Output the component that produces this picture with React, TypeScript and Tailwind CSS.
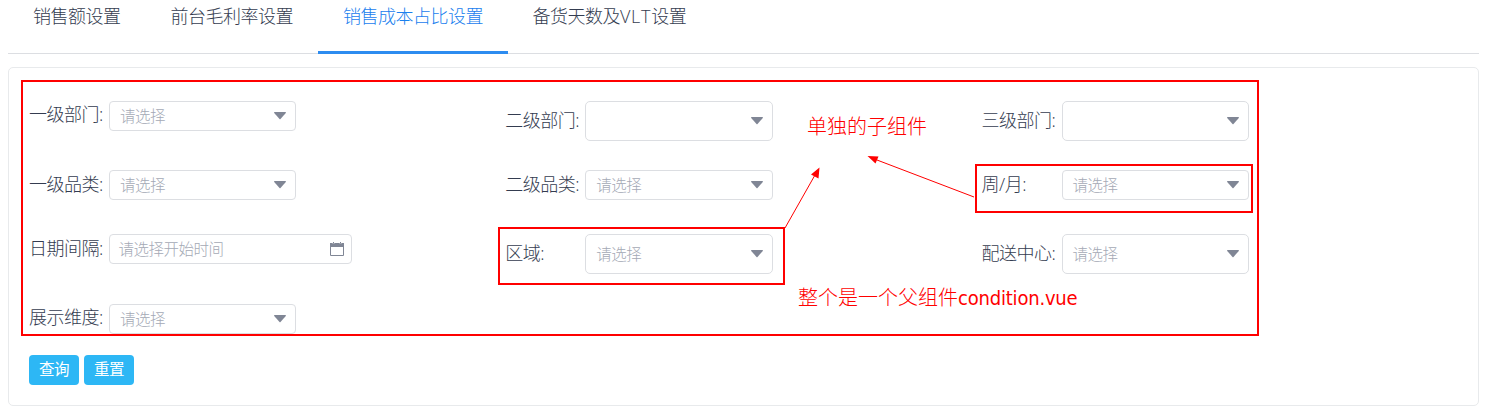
import type { ReactNode } from 'react';

const tabs = [
  { name: '销售额设置', style: 'w-[137.5px]' },
  { name: '前台毛利率设置', style: 'w-[172.5px]' },
  { name: '销售成本占比设置', style: 'w-[190px] text-[#1a80ee] border-b-[3px] border-[#2d8cf0]' },
];

function Caret() {
  return (
    <svg className="h-[8px] w-[12px] shrink-0" viewBox="0 0 12 8" fill="#808695">
      <path d="M.6 0h10.8c.5 0 .7.5.4.9L6.5 6.9c-.3.3-.7.3-1 0L.2.9C-.1.5.1 0 .6 0z" />
    </svg>
  );
}

function CalendarIcon() {
  return (
    <svg className="mb-px h-[14px] w-[14px] shrink-0" viewBox="0 0 14 14">
      <path d="M0 1h14v4H0z" fill="#808695" />
      <path d="M.5 4v9.5h13V4" fill="none" stroke="#808695" />
      <path d="M3.5 0v1.600M10.5 0v1.600" stroke="#fff" strokeWidth="2" />
      <path d="M3.5 0v1.500M10.5 0v1.500" stroke="#808695" />
    </svg>
  );
}

type FieldProps = { label: string; children: ReactNode; shift?: string };

function Field({ label, children, shift = 'pt-[2px]' }: FieldProps) {
  return (
    <div className="flex items-start">
      <span className={`${shift} w-[80px] shrink-0 whitespace-nowrap leading-[24px]`}>{label}</span>
      {children}
    </div>
  );
}

function Select({ tall = false, placeholder = '请选择' }: { tall?: boolean; placeholder?: string }) {
  return (
    <div
      className={`${tall ? 'h-[40px] rounded-[5px]' : 'h-[30px] rounded-[4px]'} flex w-[187.4px] items-center justify-between border border-[#dcdee2] bg-white pl-[10px] pr-[9px] text-[15.5px] tracking-[-0.5px] text-[#a4a9b5]`}
    >
      <span className="leading-[28px]">{placeholder}</span>
      <Caret />
    </div>
  );
}

export default function App() {
  return (
    <div className="relative h-[413px] w-[1493px] overflow-hidden bg-white pl-2 pr-[14px] text-[18px] font-light tracking-[-0.5px] text-[#343c50] [font-family:'Open_Sans','Noto_Sans_CJK_SC',sans-serif]">
      <nav className="flex h-[54px] border-b border-[#dcdee2]">
        {tabs.map((tab) => (
          <div key={tab.name} className={`${tab.style} h-[54px] shrink-0 whitespace-nowrap pl-[25px] pt-[2px] leading-[28px]`}>
            {tab.name}
          </div>
        ))}
        <div className="h-[54px] w-[205px] shrink-0 whitespace-nowrap pl-[24.5px] pt-[2px] leading-[28px]">
          备货天数及<span className="tracking-[0.7px]">VLT</span>设置
        </div>
      </nav>

      <main className="mt-[13px] h-[339px] rounded-[5px] border border-[#e8eaec] pl-[20px] pt-[33px]">
        <div className="grid grid-cols-[476.3px_476.3px_270px] grid-rows-[69px_64px_70px_51px] items-start">
          <Field label="一级部门:" shift="pt-px"><Select /></Field>
          <Field label="二级部门:" shift="pt-[7px]"><Select tall placeholder="" /></Field>
          <Field label="三级部门:" shift="pt-[7px]"><Select tall placeholder="" /></Field>

          <Field label="一级品类:"><Select /></Field>
          <Field label="二级品类:"><Select /></Field>
          <Field label="周/月:"><Select /></Field>

          <Field label="日期间隔:">
            <div className="flex h-[30px] w-[243px] items-center justify-between rounded-[4px] border border-[#dcdee2] pl-[8.5px] pr-[7px] text-[15.5px] tracking-[-0.5px] text-[#a4a9b5]">
              <span className="leading-[28px]">请选择开始时间</span>
              <CalendarIcon />
            </div>
          </Field>
          <Field label="区域:" shift="pt-[7px]"><Select tall /></Field>
          <Field label="配送中心:" shift="pt-[7px]"><Select tall /></Field>

          <Field label="展示维度:" shift="pt-px"><Select /></Field>
        </div>
        <div className="flex gap-[5px] text-[15.5px] text-white">
          <button className="h-[30px] w-[50px] rounded-[4px] bg-[#2db7f5] pb-px font-normal tracking-[-0.5px]">查询</button>
          <button className="h-[30px] w-[50px] rounded-[4px] bg-[#2db7f5] pb-px font-normal tracking-[-0.5px]">重置</button>
        </div>
      </main>

      <div className="pointer-events-none absolute left-[21px] top-[80px] h-[256px] w-[1238px] border-2 border-[#ff0000]" />
      <div className="pointer-events-none absolute left-[498px] top-[227px] h-[58px] w-[287px] border-2 border-[#ff0000]" />
      <div className="pointer-events-none absolute left-[975px] top-[164px] h-[49px] w-[278px] border-2 border-[#ff0000]" />
      <svg className="pointer-events-none absolute left-[780px] top-[150px] h-[80px] w-[200px]" viewBox="780 150 200 80" fill="#ff0000" stroke="#ff0000">
        <path d="M785 228L815 175M974 197L877 160" />
        <path stroke="none" d="M819.5 167.5L818.5 178.5L811 174.500ZM867.500 156L878.500 156.500L875.500 163.500Z" />
      </svg>
      <div className="absolute left-[807px] top-[112px] whitespace-nowrap text-[20px] leading-[30px] tracking-normal text-[#ff0000]">单独的子组件</div>
      <div className="absolute left-[798px] top-[283px] whitespace-nowrap text-[20px] leading-[30px] tracking-normal text-[#ff0000]">
        整个是一个父组件<span className="font-normal tracking-[-0.2px] [font-family:'DejaVu_Sans_Condensed','DejaVu_Sans',sans-serif]">condition.vue</span>
      </div>
    </div>
  );
}
